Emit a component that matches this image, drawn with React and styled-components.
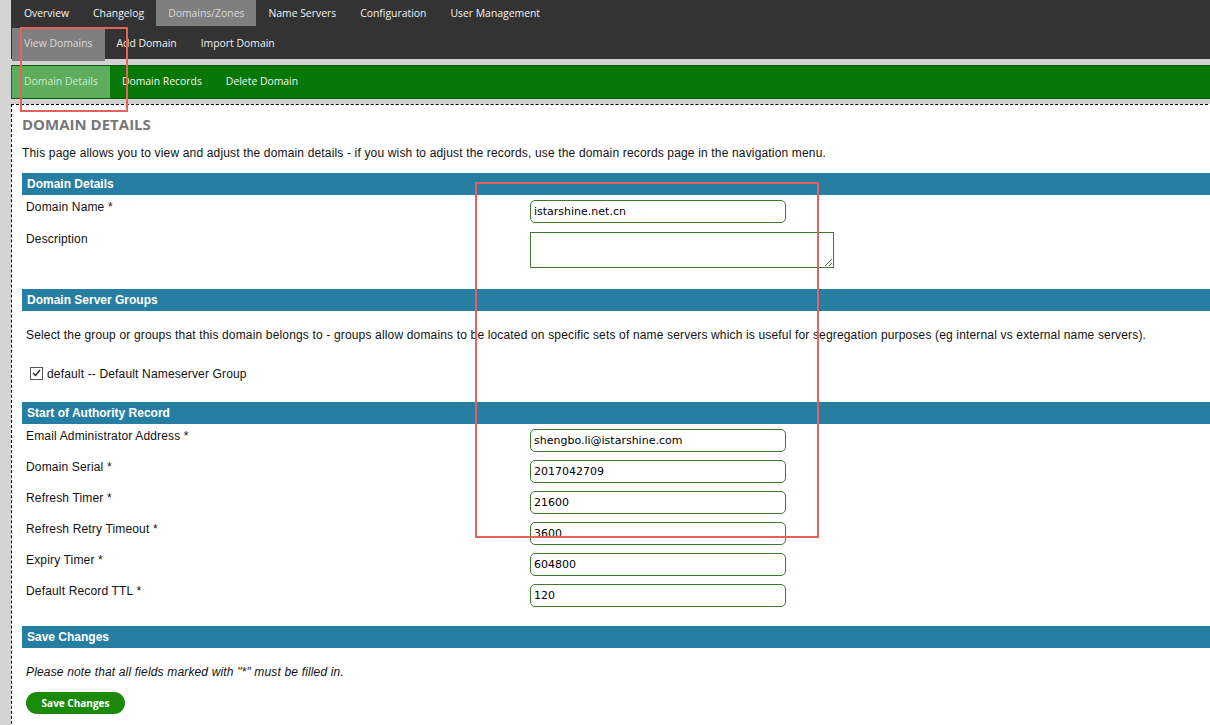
import React from 'react';
import styled, { createGlobalStyle } from 'styled-components';

const GlobalStyle = createGlobalStyle`
  html, body {
    margin: 0;
    padding: 0;
    overflow: hidden;
    background: #d4d4d4;
  }
  body {
    font-family: "Liberation Sans", Arial, sans-serif;
    font-size: 12px;
    letter-spacing: 0.16px;
    color: #111;
  }
`;

const Page = styled.div`
  position: relative;
  padding-left: 11px;
  min-height: 725px;
`;

const Nav = styled.div`
  background: #333333;
  height: 59px;
  font-family: "Open Sans", "DejaVu Sans", sans-serif;
  font-size: 10.4px;
  letter-spacing: 0;
`;

const NavRow = styled.div`
  display: flex;
  height: ${(p) => p.h}px;
  padding-top: ${(p) => p.top || 0}px;
  padding-left: 1px;
`;

const NavItem = styled.div`
  display: flex;
  align-items: center;
  padding: 0 12px ${(p) => p.lift || 0}px;
  color: ${(p) => (p.active ? '#d8d8d8' : '#f2f2f2')};
  background: ${(p) => (p.active ? '#7f7f7f' : 'transparent')};
  white-space: nowrap;
`;

const Gap = styled.div`
  height: ${(p) => p.h}px;
  background: #d2d2d2;
`;

const GreenBar = styled.div`
  display: flex;
  height: 32px;
  background: #077807;
  border-top: 1px solid #0a5e0a;
  border-bottom: 1px solid #0a5e0a;
  padding-left: 1px;
  font-family: "Open Sans", "DejaVu Sans", sans-serif;
  font-size: 10.4px;
  letter-spacing: 0;
`;

const GreenItem = styled.div`
  display: flex;
  align-items: center;
  padding: 0 12px 2px;
  color: ${(p) => (p.active ? '#cfe8cf' : '#f4f4f4')};
  background: ${(p) => (p.active ? '#5dad5d' : 'transparent')};
  white-space: nowrap;
`;

const Content = styled.div`
  background: #fff;
  border: 1px dashed #000;
  width: 1260px;
  min-height: 640px;
  padding: 8px 0 0 10px;
`;

const Heading = styled.h1`
  margin: 0;
  font-family: "Open Sans", "DejaVu Sans", sans-serif;
  font-weight: 700;
  font-size: 15px;
  line-height: 22px;
  letter-spacing: 0;
  color: #777;
`;

const Intro = styled.p`
  margin: 11px 0 13px;
  line-height: 14px;
`;

const SectionBar = styled.div`
  height: 22px;
  line-height: 22px;
  background: #267fa2;
  color: #fff;
  font-weight: 700;
  letter-spacing: 0;
  padding-left: 5px;
`;

const Rows = styled.div`
  padding: 5px 0 ${(p) => p.bottom}px;
`;

const Row = styled.div`
  display: grid;
  grid-template-columns: 508px 1fr;
  margin-bottom: ${(p) => p.gap || 8}px;
  &:last-child {
    margin-bottom: 0;
  }
`;

const Label = styled.div`
  padding-left: 4px;
  line-height: 14px;
`;

const TextInput = styled.input`
  box-sizing: border-box;
  width: 256px;
  height: 23px;
  border: 1px solid #3d7a2e;
  border-radius: 5px;
  padding: 0 3px;
  font-family: "DejaVu Sans", Verdana, sans-serif;
  font-size: 11px;
  letter-spacing: 0;
  color: #000;
  background: #fff;
  outline: none;
`;

const TextArea = styled.textarea`
  box-sizing: border-box;
  width: 304px;
  height: 36px;
  border: 1px solid #3d7a2e;
  border-radius: 0;
  padding: 2px 3px;
  font-family: "DejaVu Sans", Verdana, sans-serif;
  font-size: 11px;
  background: #fff;
  outline: none;
  display: block;
`;

const Note = styled.p`
  margin: ${(p) => p.m};
  line-height: 14px;
  padding-left: 4px;
  font-style: ${(p) => (p.italic ? 'italic' : 'normal')};
`;

const CheckLine = styled.label`
  display: flex;
  align-items: center;
  gap: 4px;
  padding-left: 8px;
  margin: 25px 0 21px;
  line-height: 14px;
`;

const CheckBox = styled.span`
  box-sizing: border-box;
  width: 13px;
  height: 13px;
  margin-top: -2px;
  border: 1px solid #555;
  background: #fff;
  display: inline-flex;
  align-items: center;
  justify-content: center;
`;

const SaveButton = styled.button`
  margin: 13px 0 0 4px;
  width: 99px;
  height: 22px;
  border: none;
  border-radius: 11px;
  background: #1b8a0b;
  color: #fff;
  font-family: "Open Sans", "DejaVu Sans", sans-serif;
  font-weight: 700;
  font-size: 10px;
  letter-spacing: 0;
  cursor: pointer;
`;

const Marker = styled.div`
  position: absolute;
  left: ${(p) => p.x}px;
  top: ${(p) => p.y}px;
  width: ${(p) => p.w}px;
  height: ${(p) => p.h}px;
  border: 2px solid #e6625c;
  box-sizing: border-box;
  pointer-events: none;
`;

const topItems = ['Overview', 'Changelog', 'Domains/Zones', 'Name Servers', 'Configuration', 'User Management'];
const subItems = ['View Domains', 'Add Domain', 'Import Domain'];
const domainItems = ['Domain Details', 'Domain Records', 'Delete Domain'];

const soaFields = [
  ['Email Administrator Address *', 'shengbo.li@istarshine.com'],
  ['Domain Serial *', '2017042709'],
  ['Refresh Timer *', '21600'],
  ['Refresh Retry Timeout *', '3600'],
  ['Expiry Timer *', '604800'],
  ['Default Record TTL *', '120'],
];

export default function App() {
  return (
    <Page>
      <GlobalStyle />
      <Nav>
        <NavRow h={26}>
          {topItems.map((t) => (
            <NavItem key={t} active={t === 'Domains/Zones'}>{t}</NavItem>
          ))}
        </NavRow>
        <NavRow h={33} top={2}>
          {subItems.map((t) => (
            <NavItem key={t} lift={4} active={t === 'View Domains'}>{t}</NavItem>
          ))}
        </NavRow>
      </Nav>
      <Gap h={6} />
      <GreenBar>
        {domainItems.map((t) => (
          <GreenItem key={t} active={t === 'Domain Details'}>{t}</GreenItem>
        ))}
      </GreenBar>
      <Gap h={5} />
      <Content>
        <Heading>DOMAIN DETAILS</Heading>
        <Intro>
          This page allows you to view and adjust the domain details - if you wish to adjust the records, use the domain records page in the navigation menu.
        </Intro>

        <SectionBar>Domain Details</SectionBar>
        <Rows bottom={21}>
          <Row gap={9}>
            <Label>Domain Name *</Label>
            <div><TextInput defaultValue="istarshine.net.cn" /></div>
          </Row>
          <Row>
            <Label>Description</Label>
            <div><TextArea /></div>
          </Row>
        </Rows>

        <SectionBar>Domain Server Groups</SectionBar>
        <Note m="17px 0 0">
          Select the group or groups that this domain belongs to - groups allow domains to be located on specific sets of name servers which is useful for segregation purposes (eg internal vs external name servers).
        </Note>
        <CheckLine>
          <CheckBox>
            <svg width="9" height="8" viewBox="0 0 9 8">
              <path d="M1 4 L3.5 6.5 L8 1" fill="none" stroke="#222" strokeWidth="1.3" />
            </svg>
          </CheckBox>
          default -- Default Nameserver Group
        </CheckLine>

        <SectionBar>Start of Authority Record</SectionBar>
        <Rows bottom={19}>
          {soaFields.map(([label, value]) => (
            <Row key={label}>
              <Label>{label}</Label>
              <div><TextInput defaultValue={value} /></div>
            </Row>
          ))}
        </Rows>

        <SectionBar>Save Changes</SectionBar>
        <Note m="17px 0 0" italic>
          Please note that all fields marked with "*" must be filled in.
        </Note>
        <SaveButton>Save Changes</SaveButton>
      </Content>
      <Marker x={20} y={27} w={108} h={85} />
      <Marker x={475} y={182} w={344} h={356} />
    </Page>
  );
}
